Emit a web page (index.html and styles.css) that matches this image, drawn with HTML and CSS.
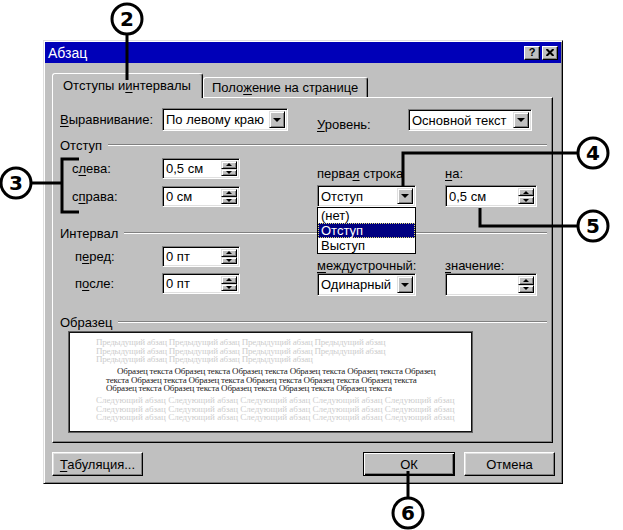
FILE: index.html
```html
<!DOCTYPE html>
<html lang="ru">
  <head>
    <meta charset="UTF-8" />
    <title>Абзац</title>
    <link rel="stylesheet" href="styles.css">
  </head>
  <body>
    <div class="page">
      <div class="dialog">
        <div class="titlebar">
          <span class="title">Абзац</span>
          <div class="title-btns">
            <span class="tbtn">?</span>
            <span class="tbtn">
              <svg width="8" height="7" viewBox="0 0 8 7"><path d="M0.5 0 L7.5 7 M7.5 0 L0.5 7" stroke="#000" stroke-width="2"/></svg>
            </span>
          </div>
        </div>

        <div class="dlg-body">
          <div class="tabs">
            <div class="tab active">Отступы и <u>и</u>нтервалы</div>
            <div class="tab">Поло<u>ж</u>ение на странице</div>
          </div>

          <div class="panel">
            <div class="row-top">
              <div class="pair">
                <span class="lbl lbl-align"><u>В</u>ыравнивание:</span>
                <div class="field combo combo-align">
                  <span class="value">По левому краю</span>
                  <span class="drop-btn"><i class="arrow"></i></span>
                </div>
              </div>
              <div class="pair pair-level">
                <span class="lbl lbl-level"><u>У</u>ровень:</span>
                <div class="field combo combo-level">
                  <span class="value">Основной текст</span>
                  <span class="drop-btn"><i class="arrow"></i></span>
                </div>
              </div>
            </div>

            <!-- Отступ -->
            <div class="group-head"><span>Отступ</span><div class="rule"></div></div>
            <div class="group">
              <div class="col-left">
                <div class="line line-1">
                  <span class="lbl">с<u>л</u>ева:</span>
                  <div class="field spin spin-left">
                    <span class="value">0,5 см</span>
                    <span class="spin-btns"><span class="sbtn"><i class="up"></i></span><span class="sbtn"><i class="down"></i></span></span>
                  </div>
                </div>
                <div class="line line-2">
                  <span class="lbl">с<u>п</u>рава:</span>
                  <div class="field spin spin-left">
                    <span class="value">0 см</span>
                    <span class="spin-btns"><span class="sbtn"><i class="up"></i></span><span class="sbtn"><i class="down"></i></span></span>
                  </div>
                </div>
              </div>
              <div class="col-mid">
                <span class="lbl col-lbl">перва<u>я</u> строка</span>
                <div class="combo-wrap">
                  <div class="field combo combo-mid">
                    <span class="value">Отступ</span>
                    <span class="drop-btn"><i class="arrow"></i></span>
                  </div>
                  <ul class="dropdown">
                    <li>(нет)</li>
                    <li class="selected">Отступ</li>
                    <li>Выступ</li>
                  </ul>
                </div>
              </div>
              <div class="col-right">
                <span class="lbl col-lbl"><u>н</u>а:</span>
                <div class="field spin spin-right">
                  <span class="value">0,5 см</span>
                  <span class="spin-btns"><span class="sbtn"><i class="up"></i></span><span class="sbtn"><i class="down"></i></span></span>
                </div>
              </div>
            </div>

            <!-- Интервал -->
            <div class="group-head"><span>Интервал</span><div class="rule"></div></div>
            <div class="group">
              <div class="col-left interval">
                <div class="line line-1">
                  <span class="lbl">п<u>е</u>ред:</span>
                  <div class="field spin spin-left">
                    <span class="value">0 пт</span>
                    <span class="spin-btns"><span class="sbtn"><i class="up"></i></span><span class="sbtn"><i class="down"></i></span></span>
                  </div>
                </div>
                <div class="line line-3">
                  <span class="lbl">п<u>о</u>сле:</span>
                  <div class="field spin spin-left">
                    <span class="value">0 пт</span>
                    <span class="spin-btns"><span class="sbtn"><i class="up"></i></span><span class="sbtn"><i class="down"></i></span></span>
                  </div>
                </div>
              </div>
              <div class="col-mid">
                <span class="lbl col-lbl2"><u>м</u>еждустрочный:</span>
                <div class="field combo combo-mid tall">
                  <span class="value">Одинарный</span>
                  <span class="drop-btn"><i class="arrow"></i></span>
                </div>
              </div>
              <div class="col-right">
                <span class="lbl col-lbl2"><u>з</u>начение:</span>
                <div class="field spin spin-right tall">
                  <span class="value"></span>
                  <span class="spin-btns"><span class="sbtn"><i class="up"></i></span><span class="sbtn"><i class="down"></i></span></span>
                </div>
              </div>
            </div>

            <!-- Образец -->
            <div class="group-head sample-head"><span>Образец</span><div class="rule"></div></div>
            <div class="sample">
              <div class="para-gray prev">
                <div>Предыдущий абзац Предыдущий абзац Предыдущий абзац Предыдущий абзац</div>
                <div>Предыдущий абзац Предыдущий абзац Предыдущий абзац Предыдущий абзац</div>
                <div>Предыдущий абзац Предыдущий абзац Предыдущий абзац</div>
              </div>
              <div class="para-sample">
                <div class="first">Образец текста Образец текста Образец текста Образец текста Образец текста Образец</div>
                <div>текста Образец текста Образец текста Образец текста Образец текста Образец текста</div>
                <div>Образец текста Образец текста Образец текста Образец текста Образец текста</div>
              </div>
              <div class="para-gray">
                <div>Следующий абзац Следующий абзац Следующий абзац Следующий абзац Следующий абзац</div>
                <div>Следующий абзац Следующий абзац Следующий абзац Следующий абзац Следующий абзац</div>
                <div>Следующий абзац Следующий абзац Следующий абзац Следующий абзац Следующий абзац</div>
              </div>
            </div>
          </div>

          <div class="buttons">
            <button class="btn"><u>Т</u>абуляция...</button>
            <button class="btn btn-default">ОК</button>
            <button class="btn">Отмена</button>
          </div>
        </div>
      </div>

      <!-- numbered callouts -->
      <svg class="callouts" width="623" height="530" viewBox="0 0 623 530">
        <g fill="none" stroke="#000" stroke-width="3">
          <path d="M127 34 V80" />
          <path d="M31 183 H62 M79 159 H62 V212 H79" />
          <path d="M578 153 H403 V187" />
          <path d="M578 226 H480 V208" />
          <path d="M408 498 V471" />
        </g>
        <g fill="#fff" stroke="#000" stroke-width="3">
          <circle cx="127" cy="19" r="15" />
          <circle cx="16" cy="183" r="15" />
          <circle cx="593" cy="153" r="15" />
          <circle cx="593" cy="226" r="15" />
          <circle cx="408" cy="513" r="15" />
        </g>
        <g class="num" text-anchor="middle">
          <text x="127" y="26">2</text>
          <text x="16" y="190">3</text>
          <text x="593" y="160">4</text>
          <text x="593" y="233">5</text>
          <text x="408" y="520">6</text>
        </g>
      </svg>
    </div>
  </body>
</html>
```

FILE: styles.css
```css
:root {
  --face: #c0c0c0;
  --light: #dfdfdf;
  --shadow: #808080;
  --title: #0000b8;
  --navy: #000080;
}

* {
  box-sizing: border-box;
  margin: 0;
  padding: 0;
}

body {
  background: #fff;
  font-family: "Liberation Sans", Arial, sans-serif;
  font-size: 13px;
  color: #000;
}

.page {
  position: relative;
  width: 623px;
  height: 530px;
  overflow: hidden;
  padding-top: 40px;
}

u {
  text-decoration: underline;
  text-underline-offset: 2px;
}

/* window frame */
.dialog {
  margin-left: 43px;
  width: 520px;
  height: 444px;
  background: var(--face);
  border: 1px solid;
  border-color: var(--light) #000 #000 var(--light);
  box-shadow: inset 1px 1px #fff, inset -1px -1px var(--shadow);
  padding: 1px;
}

.titlebar {
  height: 21px;
  background: var(--title);
  display: flex;
  align-items: center;
  justify-content: space-between;
  padding: 0 3px 0 3px;
}

.title {
  color: #fff;
  font-size: 14px;
}

.title-btns {
  display: flex;
  gap: 2px;
}

.tbtn {
  width: 16px;
  height: 14px;
  background: var(--face);
  border: 1px solid;
  border-color: #fff #000 #000 #fff;
  box-shadow: inset -1px -1px var(--shadow);
  display: flex;
  align-items: center;
  justify-content: center;
  font-weight: bold;
  font-size: 11px;
  line-height: 1;
}

.dlg-body {
  padding: 10px 0 0 7px;
}

/* tabs */
.tabs {
  display: flex;
  align-items: flex-end;
  height: 24px;
}

.tab {
  height: 20px;
  padding: 0 9px 0 8px;
  display: flex;
  align-items: center;
  background: var(--face);
  border: 1px solid;
  border-bottom: none;
  border-color: #fff #000 transparent #fff;
  border-radius: 3px 3px 0 0;
  box-shadow: inset -1px 0 var(--shadow);
  white-space: nowrap;
}

.tab.active {
  position: relative;
  z-index: 1;
  height: 25px;
  margin-bottom: -1px;
  padding: 0 11px 2px 10px;
}

.panel {
  width: 501px;
  height: 346px;
  border: 1px solid;
  border-color: #fff #000 #000 #fff;
  box-shadow: inset -1px -1px var(--shadow);
  padding: 10px 5px 0 7px;
}

/* sunken fields */
.field {
  display: flex;
  align-items: stretch;
  background: #fff;
  border: 1px solid;
  border-color: var(--shadow) #fff #fff var(--shadow);
  box-shadow: inset 1px 1px #000, inset -1px -1px var(--light);
  padding: 2px;
}

.field .value {
  flex: 1;
  display: flex;
  align-items: center;
  padding-left: 1px;
  white-space: nowrap;
  overflow: hidden;
}

.drop-btn {
  width: 16px;
  background: var(--face);
  border: 1px solid;
  border-color: var(--light) #000 #000 var(--light);
  box-shadow: inset 1px 1px #fff, inset -1px -1px var(--shadow);
  display: flex;
  align-items: center;
  justify-content: center;
}

.arrow {
  border-left: 4px solid transparent;
  border-right: 4px solid transparent;
  border-top: 4px solid #000;
}

.spin-btns {
  width: 16px;
  display: flex;
  flex-direction: column;
}

.sbtn {
  flex: 1;
  background: var(--face);
  border: 1px solid;
  border-color: var(--light) #000 #000 var(--light);
  box-shadow: inset 1px 1px #fff, inset -1px -1px var(--shadow);
  display: flex;
  align-items: center;
  justify-content: center;
}

.up {
  border-left: 3px solid transparent;
  border-right: 3px solid transparent;
  border-bottom: 3px solid #000;
}

.down {
  border-left: 3px solid transparent;
  border-right: 3px solid transparent;
  border-top: 3px solid #000;
}

/* top row */
.row-top {
  display: flex;
  height: 23px;
}

.pair {
  display: flex;
}

.lbl {
  white-space: nowrap;
  line-height: 14px;
}

.lbl-align {
  width: 102px;
  align-self: center;
}

.combo-align {
  width: 126px;
  height: 23px;
}

.pair-level {
  margin-left: 29px;
}

.lbl-level {
  width: 91px;
  margin-top: 10px;
}

.combo-level {
  width: 124px;
  height: 22px;
  margin-top: 1px;
}

/* group headings */
.group-head {
  display: flex;
  align-items: center;
  gap: 6px;
  height: 14px;
  margin-top: 7px;
}

.group-head .rule {
  flex: 1;
  border-top: 1px solid var(--shadow);
  border-bottom: 1px solid #fff;
}

.group + .group-head {
  margin-top: 19px;
}

.group {
  display: flex;
}

.col-left {
  width: 257px;
}

.line {
  display: flex;
  align-items: center;
}

.line .lbl {
  width: 102px;
  padding-left: 12px;
}

.interval .line .lbl {
  padding-left: 15px;
}

.line-1 {
  margin-top: 6px;
}

.line-2 {
  margin-top: 7px;
}

.line-3 {
  margin-top: 6px;
}

.spin-left {
  width: 78px;
  height: 21px;
}

.col-mid {
  width: 128px;
  display: flex;
  flex-direction: column;
  align-items: flex-start;
}

.col-right {
  display: flex;
  flex-direction: column;
  align-items: flex-start;
}

.col-lbl {
  margin-top: 15px;
  margin-bottom: 4px;
}

.col-lbl2 {
  margin-top: 19px;
  margin-bottom: 0;
}

.combo-mid {
  width: 99px;
  height: 22px;
}

.spin-right {
  width: 92px;
  height: 22px;
}

.tall {
  height: 23px;
}

/* open dropdown list */
.combo-wrap {
  position: relative;
}

.dropdown {
  position: absolute;
  top: 100%;
  left: 0;
  z-index: 2;
  width: 99px;
  list-style: none;
  background: #fff;
  border: 1px solid #000;
}

.dropdown li {
  height: 15px;
  line-height: 13px;
  padding-left: 2px;
  border: 1px solid transparent;
}

.dropdown li.selected {
  background: var(--navy);
  color: #fff;
  border: 1px dotted #e0e070;
}

/* sample preview */
.sample-head {
  margin-top: 19px;
}

.sample {
  margin: 2px 0 0 8px;
  width: 405px;
  height: 102px;
  background: #fff;
  border: 1px solid #606060;
  box-shadow: inset 0 0 0 1px #111;
  padding: 6px 0 0 27px;
  font-family: "Liberation Serif", "Times New Roman", serif;
  font-size: 9px;
  line-height: 8.5px;
  white-space: nowrap;
  overflow: hidden;
}

.para-gray {
  color: #cdcdcd;
}

.para-gray.prev {
  letter-spacing: -0.22px;
}

.para-sample {
  color: #1a1a1a;
  letter-spacing: -0.2px;
  margin: 3.5px 0 3.5px 10px;
}

.para-sample .first {
  padding-left: 11px;
}

/* buttons */
.buttons {
  display: flex;
  width: 503px;
  margin-top: 9px;
}

.btn {
  width: 91px;
  height: 24px;
  font-family: inherit;
  font-size: 13px;
  background: var(--face);
  border: 1px solid;
  border-color: #fff #000 #000 #fff;
  box-shadow: inset -1px -1px var(--shadow), inset 1px 1px var(--light);
}

.btn-default {
  margin-left: auto;
  margin-right: 9px;
  width: 92px;
  border: 1px solid #000;
  box-shadow: inset 1px 1px #fff, inset -1px -1px #000, inset -2px -2px var(--shadow);
}

/* callouts */
.callouts {
  position: absolute;
  top: 0;
  left: 0;
  z-index: 5;
  pointer-events: none;
}

.num text {
  font-family: "DejaVu Sans", sans-serif;
  font-weight: bold;
  font-size: 20px;
}
```
